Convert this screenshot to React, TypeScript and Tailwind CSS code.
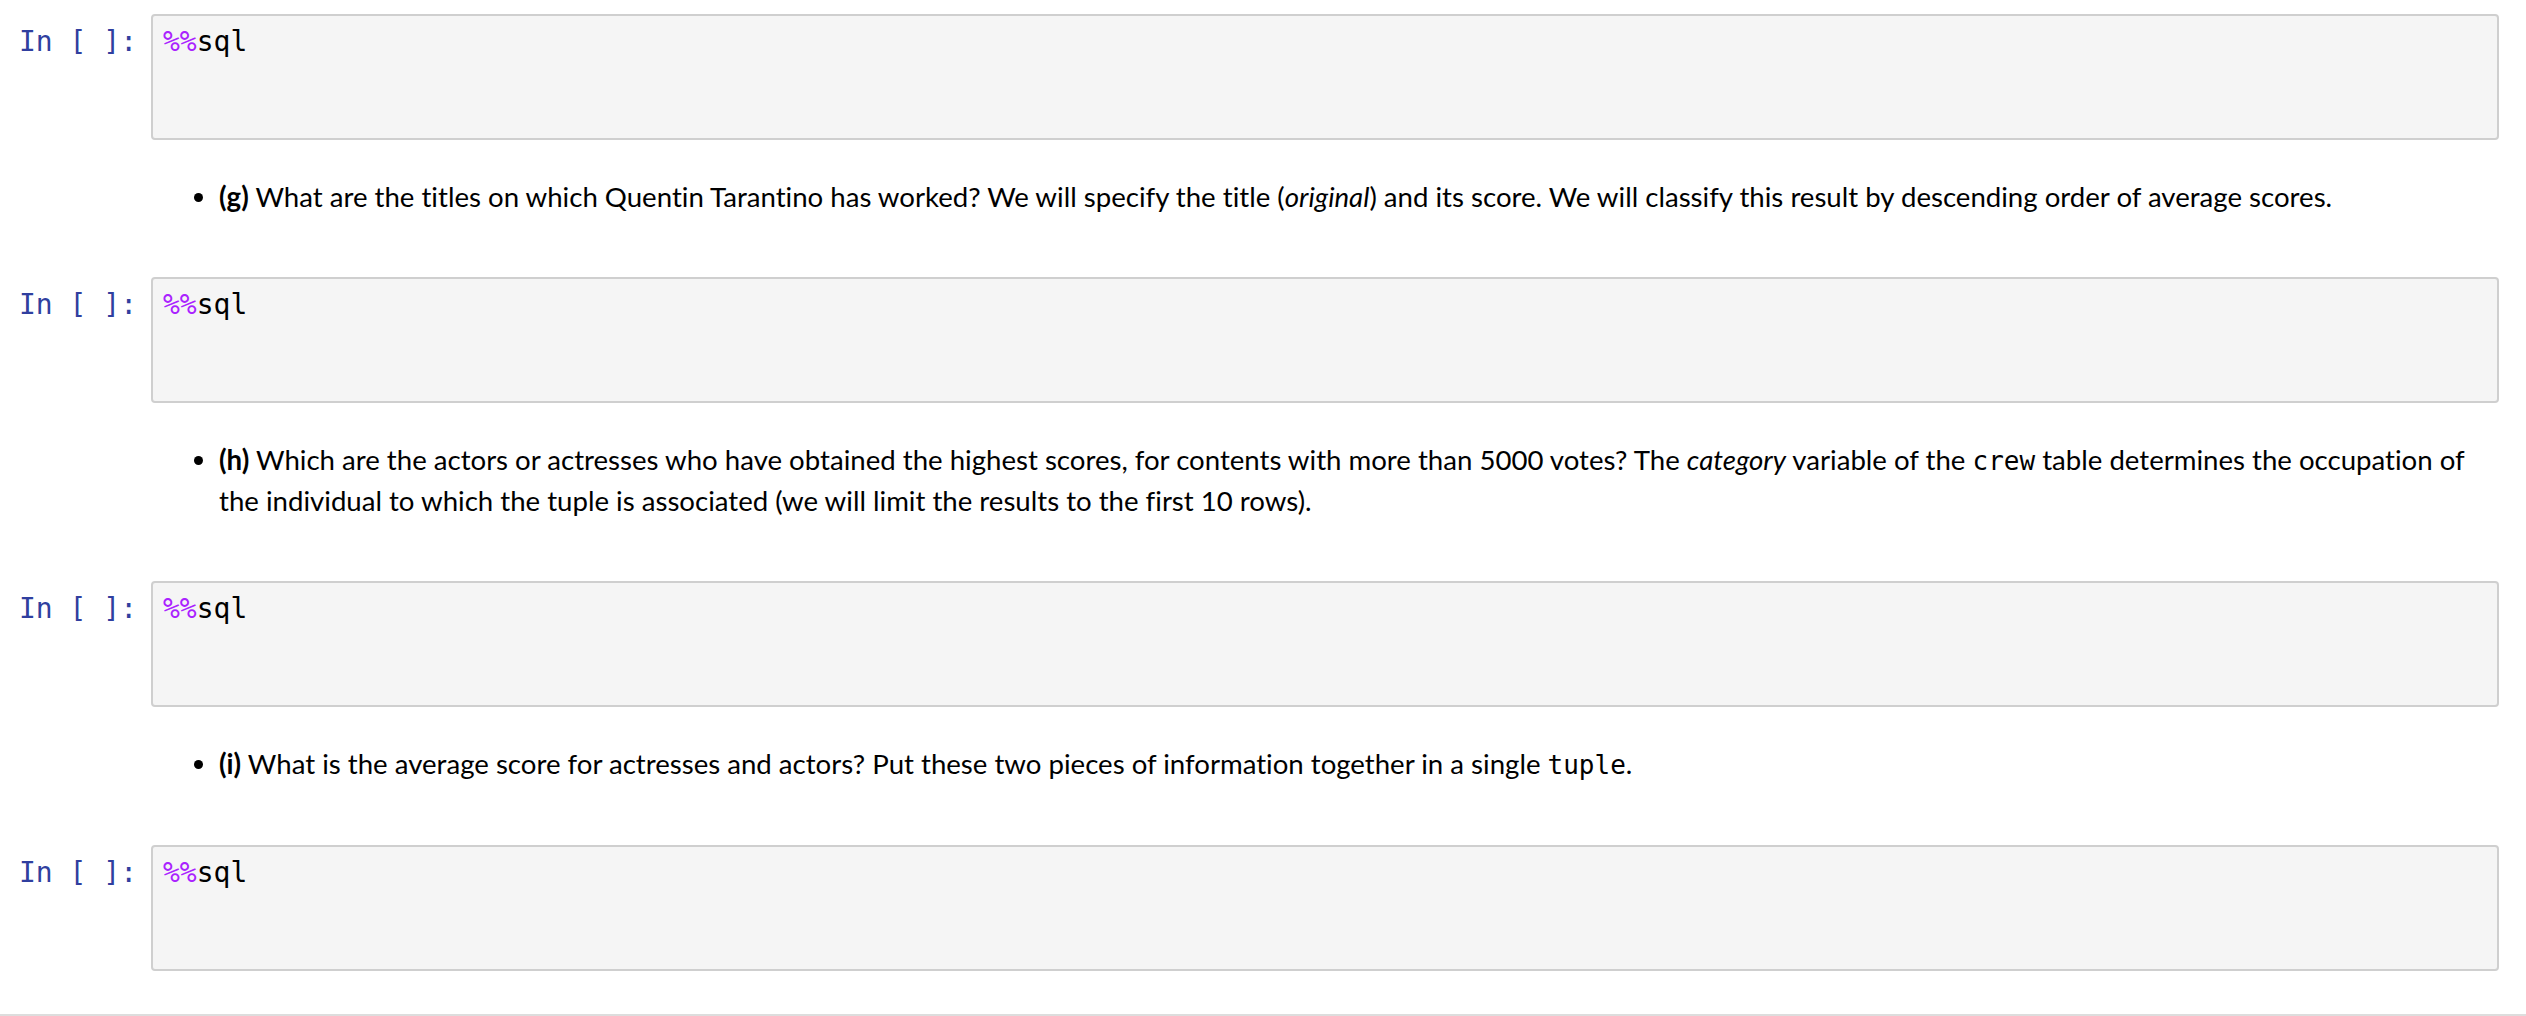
import React from "react";

const mono = { fontFamily: '"DejaVu Sans Mono", monospace' };

const CodeCell = () => {
  return (
    <div className="flex w-full">
      <div
        className="w-[151px] shrink-0 pr-[14px] pt-[11px] text-right text-[28px] leading-[33px] text-[#303F9F]"
        style={mono}
      >
        In&nbsp;[&nbsp;]:
      </div>
      <div
        className="h-[126px] flex-1 rounded-[4px] border-2 border-[#cfcfcf] bg-[#f5f5f5] px-[10px] pt-[9px] text-[28px] leading-[33px] text-black"
        style={mono}
      >
        <span className="text-[#AA22FF]">%%</span>sql
      </div>
    </div>
  );
};

const Code = ({ children }: { children: React.ReactNode }) => (
  <code className="text-[26px]" style={mono}>
    {children}
  </code>
);

const Markdown = ({ children }: { children: React.ReactNode }) => {
  return (
    <div className="pl-[151px] pt-[37px] pb-[60px]">
      <ul className="list-disc pl-[68px] text-[27.6px] leading-[40px] text-black [font-variant-ligatures:no-common-ligatures]">
        <li>{children}</li>
      </ul>
    </div>
  );
};

export default function App() {
  return (
    <div
      className="flex min-h-[1016px] w-full flex-col bg-white pt-[14px] pr-[27px]"
      style={{ fontFamily: 'Lato, "Open Sans", sans-serif' }}
    >
      <CodeCell />
      <Markdown>
        <b>(g)</b> What are the titles on which Quentin Tarantino has worked? We
        will specify the title (<i>original</i>) and its score. We will classify
        this result by descending order of average scores.
      </Markdown>
      <CodeCell />
      <Markdown>
        <b>(h)</b> Which are the actors or actresses who have obtained the
        highest scores, for contents with more than 5000 votes? The{" "}
        <i>category</i> variable of the <Code>crew</Code> table determines the
        occupation of the individual to which the tuple is associated (we will
        limit the results to the first 10 rows).
      </Markdown>
      <CodeCell />
      <Markdown>
        <b>(i)</b> What is the average score for actresses and actors? Put these
        two pieces of information together in a single <Code>tuple</Code>.
      </Markdown>
      <CodeCell />
      <div className="flex-1" />
      <div className="-mr-[27px] h-[2px] bg-[#dddddd]" />
    </div>
  );
}
